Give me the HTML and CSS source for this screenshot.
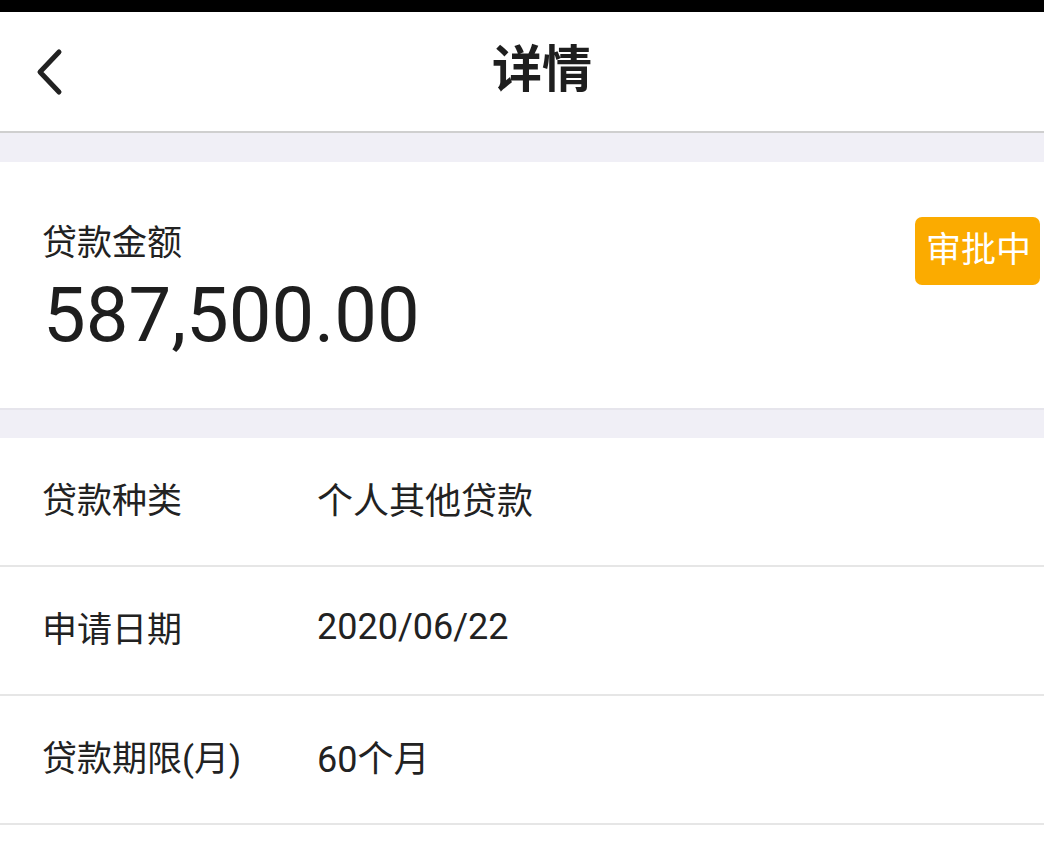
FILE: index.html
```html
<!DOCTYPE html>
<html lang="zh-CN">
<head>
<meta charset="utf-8">
<title>详情</title>
<link rel="stylesheet" href="styles.css">
</head>
<body>
<div class="statusbar"></div>
<header class="navbar">
  <div class="back">
    <svg width="32" height="50" viewBox="0 0 32 50"><path d="M25 5 L6 25 L25 45" fill="none" stroke="#222" stroke-width="5" stroke-linecap="round" stroke-linejoin="round"/></svg>
  </div>
  <h1 class="title">详情</h1>
</header>
<div class="gap"></div>
<section class="amount">
  <div class="amount-text">
    <div class="amount-label">贷款金额</div>
    <div class="amount-value">587,500.00</div>
  </div>
  <div class="badge">审批中</div>
</section>
<div class="gap gap2"></div>
<section class="list">
  <div class="row"><span class="label">贷款种类</span><span class="value">个人其他贷款</span></div>
  <div class="row"><span class="label">申请日期</span><span class="value">2020/06/22</span></div>
  <div class="row"><span class="label">贷款期限(月)</span><span class="value">60个月</span></div>
</section>
</body>
</html>
```
FILE: styles.css
```css
* { box-sizing: border-box; }
html, body { margin: 0; padding: 0; background: #fff; }
body {
  font-family: Roboto, "Noto Sans CJK SC", sans-serif;
  color: #222;
}
.statusbar { height: 12px; background: #000; }
.navbar {
  height: 121px;
  border-bottom: 2px solid #cfcfcf;
  display: flex;
  align-items: center;
  justify-content: center;
  position: relative;
}
.back {
  position: absolute;
  left: 34px;
  top: 35px;
  width: 32px;
  height: 50px;
}
.title {
  margin: -4px 0 0 40px;
  font-size: 50px;
  font-weight: 700;
  line-height: 1;
  color: #1e1e1e;
}
.gap { height: 29px; background: #f0eff6; }
.gap2 { height: 30px; border-top: 2px solid #e6e5ec; }
.amount {
  height: 246px;
  display: flex;
  justify-content: space-between;
  align-items: flex-start;
  padding: 0 4px 0 42px;
}
.amount-text { padding-top: 57px; }
.amount-label { font-size: 35px; line-height: 50px; color: #222; }
.amount-value {
  font-size: 76px;
  line-height: 90px;
  color: #1e1e1e;
  margin-top: 1px;
  margin-left: 1px;
}
.badge {
  margin-top: 55px;
  background: #fbab00;
  color: #fff;
  font-size: 35px;
  line-height: 68px;
  padding: 0 9px 0 11px;
  border-radius: 7px;
}
.row {
  height: 129px;
  border-bottom: 2px solid #e6e6e6;
  display: flex;
  align-items: center;
  padding-left: 42px;
  padding-bottom: 8px;
  font-size: 36px;
}
.label { width: 275px; color: #222; font-size: 35px; }
.value { color: #222; }
```
